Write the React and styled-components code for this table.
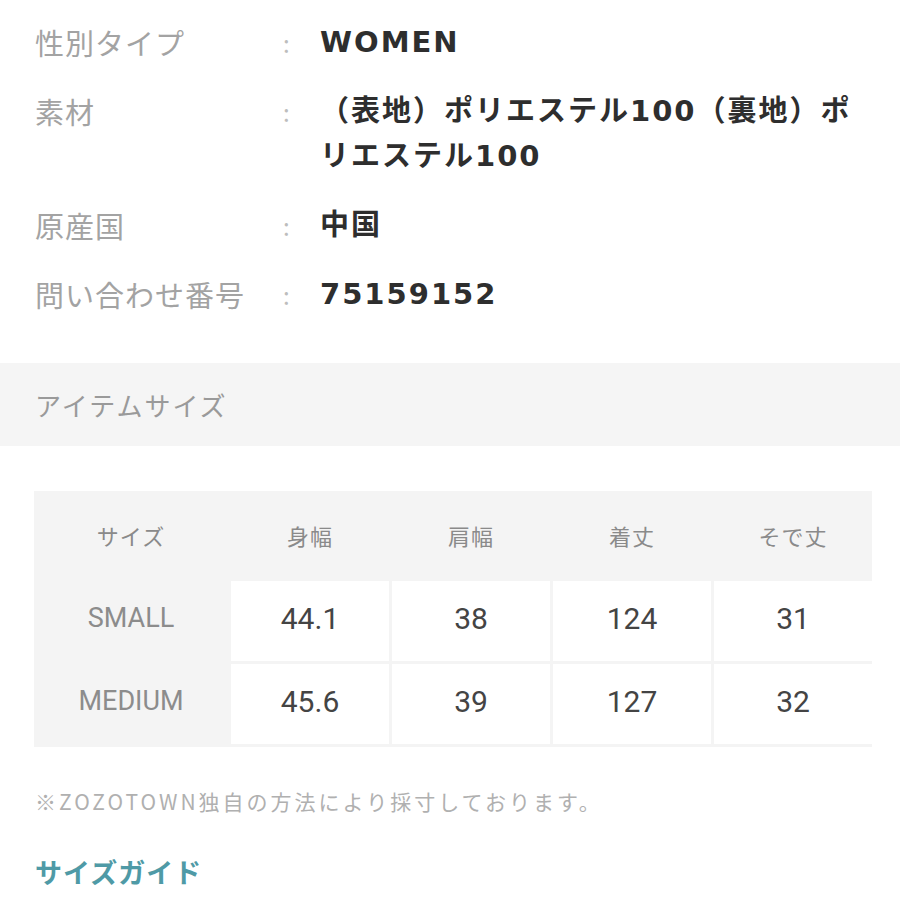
import React from "react";
import styled, { createGlobalStyle } from "styled-components";

const Global = createGlobalStyle`
  html, body { margin: 0; padding: 0; background: #fff; }
  body { font-family: "Noto Sans CJK JP", "Noto Sans", sans-serif; }
`;

const Page = styled.div`
  width: 900px;
  height: 900px;
  overflow: hidden;
  background: #fff;
`;

const Specs = styled.dl`
  margin: 0;
  padding: 20px 0 0 35px;
  display: grid;
  grid-template-columns: 248px 37px 1fr;
  row-gap: 24px;
`;

const Label = styled.dt`
  margin: 0;
  font-size: 29px;
  line-height: 45px;
  letter-spacing: 1px;
  color: #a3a3a3;
  font-weight: 400;
`;

const Colon = styled.span`
  font-size: 24px;
  line-height: 45px;
  color: #bdbdbd;
`;

const Value = styled.dd`
  margin: 0;
  font-family: "DejaVu Sans", "Noto Sans CJK JP", sans-serif;
  font-size: 29px;
  line-height: 45px;
  letter-spacing: 2px;
  color: #2e2e2e;
  font-weight: 700;
`;

const SectionBar = styled.div`
  margin-top: 46px;
  height: 83px;
  background: #f5f5f5;
  display: flex;
  align-items: center;
  padding-left: 35px;
  font-size: 26px;
  color: #9a9a9a;
  letter-spacing: 2px;
`;

const Table = styled.div`
  margin: 45px 28px 0 34px;
  display: grid;
  grid-template-columns: 194px repeat(4, 1fr);
  grid-template-rows: 87px 80px 80px;
  column-gap: 3px;
  row-gap: 3px;
  background: #f4f4f4;
  padding: 0 0 3px 0;
`;

const HeadCell = styled.div`
  display: flex;
  align-items: center;
  justify-content: center;
  font-size: 22px;
  color: #8a8a8a;
  letter-spacing: 1px;
`;

const RowHead = styled.div`
  display: flex;
  align-items: center;
  justify-content: center;
  padding-bottom: 6px;
  font-family: Roboto, "Liberation Sans", sans-serif;
  font-size: 27px;
  color: #8c8c8c;
`;

const Cell = styled.div`
  display: flex;
  align-items: center;
  justify-content: center;
  padding-bottom: 6px;
  background: #fff;
  font-family: Roboto, "Liberation Sans", sans-serif;
  font-size: 30px;
  color: #444;
`;

const Note = styled.p`
  margin: 39px 0 0 35px;
  font-size: 21px;
  line-height: 30px;
  letter-spacing: 3px;
  color: #b0b0b0;
`;

const GuideLink = styled.a`
  display: inline-block;
  margin: 36px 0 0 35px;
  font-size: 27px;
  font-weight: 700;
  letter-spacing: 1px;
  color: #4f9aa6;
  text-decoration: none;
`;

const specs = [
  ["性別タイプ", "WOMEN"],
  ["素材", <>（表地）ポリエステル100（裏地）ポ<br />リエステル100</>],
  ["原産国", "中国"],
  ["問い合わせ番号", "75159152"],
];

const heads = ["サイズ", "身幅", "肩幅", "着丈", "そで丈"];
const rows = [
  ["SMALL", "44.1", "38", "124", "31"],
  ["MEDIUM", "45.6", "39", "127", "32"],
];

export default function App() {
  return (
    <Page>
      <Global />
      <Specs>
        {specs.map(([k, v]) => (
          <React.Fragment key={k}>
            <Label>{k}</Label>
            <Colon>:</Colon>
            <Value>{v}</Value>
          </React.Fragment>
        ))}
      </Specs>
      <SectionBar>アイテムサイズ</SectionBar>
      <Table>
        {heads.map((h) => (
          <HeadCell key={h}>{h}</HeadCell>
        ))}
        {rows.map((r) => (
          <React.Fragment key={r[0]}>
            <RowHead>{r[0]}</RowHead>
            {r.slice(1).map((c, i) => (
              <Cell key={i}>{c}</Cell>
            ))}
          </React.Fragment>
        ))}
      </Table>
      <Note>※ZOZOTOWN独自の方法により採寸しております。</Note>
      <GuideLink href="#">サイズガイド</GuideLink>
    </Page>
  );
}
